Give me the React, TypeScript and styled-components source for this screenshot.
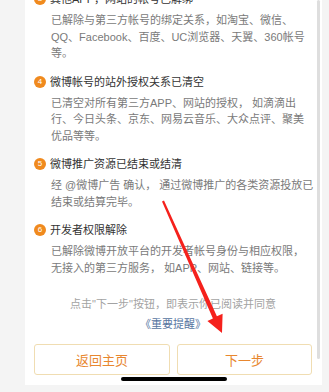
import React from "react";
import styled, { createGlobalStyle } from "styled-components";

const Global = createGlobalStyle`
  html, body { margin: 0; padding: 0; background: #f4f4f4; overflow: hidden; }
  * { box-sizing: border-box; }
`;

const Page = styled.div`
  position: relative;
  width: 329px;
  height: 392px;
  overflow: hidden;
  background: #f4f4f4;
  font-family: "Liberation Sans", "Noto Sans CJK SC", sans-serif;
`;

const Card = styled.div`
  margin: -9px 0 0 25px;
  width: 297px;
  background: #ffffff;
  padding: 0 10px 10px 9px;
  display: flex;
  flex-direction: column;
`;

const Section = styled.section`
  display: flex;
  flex-direction: column;
  gap: 5px;
  margin-bottom: 12px;
  &:last-of-type { margin-bottom: 0; }
`;

const Heading = styled.div`
  display: flex;
  align-items: center;
  gap: 4px;
  height: 16px;
  font-size: 11px;
  line-height: 16px;
  color: #333333;
  white-space: nowrap;
`;

const Badge = styled.span`
  width: 12px;
  height: 12px;
  border-radius: 50%;
  background: #f08a1e;
  color: #ffffff;
  font-size: 8px;
  line-height: 12px;
  text-align: center;
  flex: none;
`;

const Body = styled.p`
  margin: 0 0 0 17px;
  font-size: 11px;
  line-height: 16.5px;
  color: #7a7a7a;
  white-space: nowrap;
`;

const Notice = styled.div`
  margin-top: 18px;
  display: flex;
  flex-direction: column;
  align-items: center;
  font-size: 11px;
  line-height: 20px;
  color: #a3a3a3;
  white-space: nowrap;
`;

const Link = styled.span`
  color: #56759f;
`;

const Buttons = styled.div`
  margin-top: 10px;
  display: grid;
  grid-template-columns: 136px 135px;
  gap: 7px;
`;

const Button = styled.button`
  height: 31px;
  border: 1px solid #f0ddb2;
  border-radius: 3px;
  background: #ffffff;
  color: #e8872f;
  font-family: "Noto Sans CJK SC", sans-serif;
  font-size: 13px;
  padding: 0;
`;

const ScrollBar = styled.div`
  position: absolute;
  left: 317px;
  top: 0;
  width: 3px;
  height: 359px;
  border-radius: 2px;
  background: #dedede;
`;

const HomeIndicator = styled.div`
  position: absolute;
  left: 121px;
  top: 377px;
  width: 106px;
  height: 4px;
  border-radius: 2px;
  background: #000000;
`;

const ArrowLayer = styled.svg`
  position: absolute;
  left: 0;
  top: 0;
  pointer-events: none;
`;

const sections: { n: number; title: string; lines: string[] }[] = [
  {
    n: 3,
    title: "其他APP，网站的帐号已解绑",
    lines: [
      "已解除与第三方帐号的绑定关系，如淘宝、微信、",
      "QQ、Facebook、百度、UC浏览器、天翼、360帐号",
      "等。",
    ],
  },
  {
    n: 4,
    title: "微博帐号的站外授权关系已清空",
    lines: [
      "已清空对所有第三方APP、网站的授权， 如滴滴出",
      "行、今日头条、京东、网易云音乐、大众点评、聚美",
      "优品等等。",
    ],
  },
  {
    n: 5,
    title: "微博推广资源已结束或结清",
    lines: ["经 @微博广告 确认， 通过微博推广的各类资源投放已", "结束或结算完毕。"],
  },
  {
    n: 6,
    title: "开发者权限解除",
    lines: ["已解除微博开放平台的开发者帐号身份与相应权限，", "无接入的第三方服务， 如APP、网站、链接等。"],
  },
];

export default function App() {
  return (
    <Page>
      <Global />
      <Card>
        {sections.map((s) => (
          <Section key={s.n}>
            <Heading>
              <Badge>{s.n}</Badge>
              {s.title}
            </Heading>
            <Body>
              {s.lines.map((l, i) => (
                <React.Fragment key={i}>
                  {i > 0 && <br />}
                  {l}
                </React.Fragment>
              ))}
            </Body>
          </Section>
        ))}
        <Notice>
          <span>点击"下一步"按钮，即表示你已阅读并同意</span>
          <Link>《重要提醒》</Link>
        </Notice>
        <Buttons>
          <Button>返回主页</Button>
          <Button>下一步</Button>
        </Buttons>
      </Card>
      <ScrollBar />
      <ArrowLayer width="329" height="392" viewBox="0 0 329 392">
        <polygon
          points="162,201.6 164,200.4 216.9,316.2 222.6,313.8 222,333 207.4,321 212.9,318.6"
          fill="#f5211c"
        />
      </ArrowLayer>
      <HomeIndicator />
    </Page>
  );
}
